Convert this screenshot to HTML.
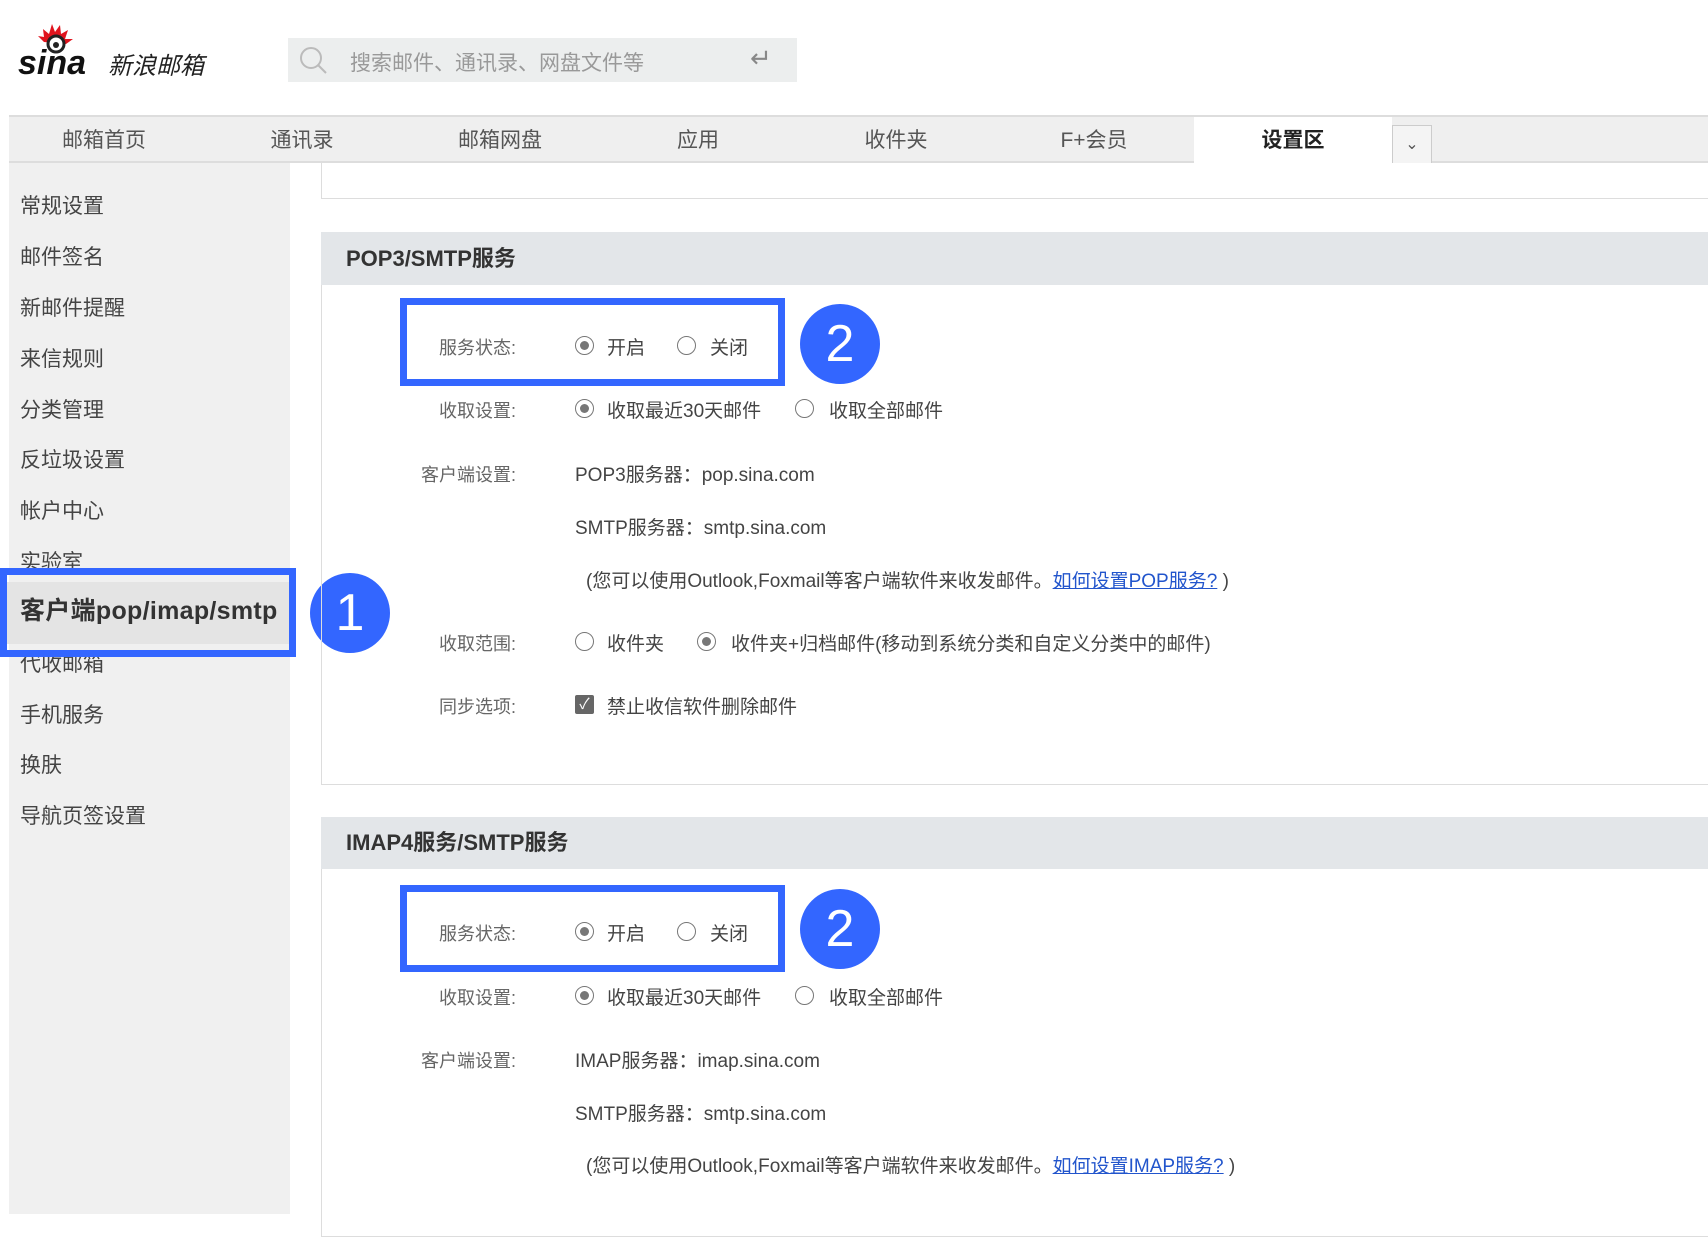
<!DOCTYPE html>
<html><head><meta charset="utf-8"><style>
*{margin:0;padding:0;box-sizing:border-box}
body{width:1708px;height:1214px;background:#fff;position:relative;overflow:hidden;font-family:"Liberation Sans","Noto Sans CJK SC",sans-serif;color:#333}
.a{position:absolute;white-space:nowrap}
.nav{position:absolute;top:115px;left:9px;width:1699px;height:48px;background:#efefef;border-top:2px solid #ddd;border-bottom:2px solid #ddd}
.tab{position:absolute;top:2px;height:44px;line-height:44px;font-size:21px;color:#555;text-align:center;width:198px}
.side{position:absolute;left:9px;top:163px;width:281px;height:1051px;background:#f0f0f0}
.si{position:absolute;left:20px;font-size:21px;color:#444;line-height:26px}
.hdr{position:absolute;left:321px;width:1387px;background:#e3e6e9;font-size:22px;font-weight:bold;color:#333;padding-left:25px}
.lbl{position:absolute;font-size:18px;color:#666;text-align:right;width:200px;left:316px}
.t{position:absolute;font-size:19px;color:#444;white-space:nowrap}
.r{position:absolute;width:19px;height:19px;border:1.5px solid #777;border-radius:50%;background:#fff}
.r.on::after{content:"";position:absolute;left:3.5px;top:3.5px;width:9px;height:9px;border-radius:50%;background:#777}
.box{position:absolute;border:7px solid #3366ff}
.c{position:absolute;width:80px;height:80px;border-radius:50%;background:#3366ff;color:#fff;font-size:52px;text-align:center;line-height:80px;font-family:"Liberation Sans",sans-serif}
a{color:#2255cc;text-decoration:underline}
</style></head><body>
<svg class="a" style="left:18px;top:22px" width="90" height="64" viewBox="0 0 90 64">
<path d="M34 2 l3 8 l5 -7 l1 9 l7 -4 l-3 9 l8 0 l-7 5 l-22 -2 l-6 -6 l6 1 l-1 -8 l6 5 z" fill="#e0141e"/>
<circle cx="38" cy="22" r="8" fill="#fff" stroke="#222" stroke-width="3"/><circle cx="38" cy="23" r="3" fill="#222"/>
<text x="0" y="52" font-family="Liberation Sans" font-weight="bold" font-style="italic" font-size="34" fill="#111">sina</text>
</svg>
<div class="a" style="left:108px;top:46px;font-size:24px;font-style:italic;color:#222">新浪邮箱</div>
<div class="a" style="left:288px;top:38px;width:509px;height:44px;background:#eceeee"></div>
<svg class="a" style="left:298px;top:45px" width="32" height="32"><circle cx="13" cy="13" r="10" fill="none" stroke="#bbb" stroke-width="2"/><line x1="20" y1="20" x2="28" y2="28" stroke="#bbb" stroke-width="2"/></svg>
<div class="a" style="left:350px;top:47px;font-size:21px;color:#999">搜索邮件、通讯录、网盘文件等</div>
<div class="a" style="left:750px;top:43px;font-size:26px;color:#888">↵</div>
<div class="nav">
<div class="tab" style="left:-4px">邮箱首页</div>
<div class="tab" style="left:194px">通讯录</div>
<div class="tab" style="left:392px">邮箱网盘</div>
<div class="tab" style="left:590px">应用</div>
<div class="tab" style="left:788px">收件夹</div>
<div class="tab" style="left:986px">F+会员</div>
<div class="tab" style="left:1185px;top:0;line-height:48px;background:#fff;color:#222;font-weight:bold;height:46px">设置区</div>
<div style="position:absolute;left:1383px;top:8px;width:40px;height:38px;border:1px solid #ccc;border-bottom:none;background:#f4f4f4;text-align:center;line-height:38px;color:#555;font-size:16px">⌄</div>
</div>
<div class="side"></div>
<div class="si" style="top:194px">常规设置</div>
<div class="si" style="top:245px">邮件签名</div>
<div class="si" style="top:296px">新邮件提醒</div>
<div class="si" style="top:347px">来信规则</div>
<div class="si" style="top:398px">分类管理</div>
<div class="si" style="top:448px">反垃圾设置</div>
<div class="si" style="top:499px">帐户中心</div>
<div class="si" style="top:550px">实验室</div>
<div class="a" style="left:7px;top:582px;width:282px;height:62px;background:#e4e4e4"></div>
<div class="si" style="top:598px;font-weight:bold;color:#333;font-size:25px;letter-spacing:0.3px">客户端pop/imap/smtp</div>
<div class="si" style="top:652px">代收邮箱</div>
<div class="si" style="top:703px">手机服务</div>
<div class="si" style="top:753px">换肤</div>
<div class="si" style="top:804px">导航页签设置</div>
<div class="box" style="left:0;top:568px;width:296px;height:89px"></div>
<div class="c" style="left:310px;top:573px">1</div>
<div class="a" style="left:321px;top:163px;width:1400px;height:36px;border:1px solid #ddd;border-top:none"></div>
<div class="a" style="left:321px;top:232px;width:1400px;height:553px;border:1px solid #ddd"></div>
<div class="hdr" style="top:232px;height:53px;line-height:53px">POP3/SMTP服务</div>
<div class="a" style="left:321px;top:817px;width:1400px;height:420px;border:1px solid #ddd"></div>
<div class="hdr" style="top:817px;height:52px;line-height:52px">IMAP4服务/SMTP服务</div>

<div class="lbl" style="top:334px">服务状态:</div>
<div class="r on" style="left:575px;top:336px"></div><div class="t" style="left:607px;top:333px">开启</div>
<div class="r" style="left:677px;top:336px"></div><div class="t" style="left:710px;top:333px">关闭</div>
<div class="lbl" style="top:397px">收取设置:</div>
<div class="r on" style="left:575px;top:399px"></div><div class="t" style="left:607px;top:396px">收取最近30天邮件</div>
<div class="r" style="left:795px;top:399px"></div><div class="t" style="left:829px;top:396px">收取全部邮件</div>
<div class="lbl" style="top:461px">客户端设置:</div>
<div class="t" style="left:575px;top:460px">POP3服务器：pop.sina.com</div>
<div class="t" style="left:575px;top:513px">SMTP服务器：smtp.sina.com</div>
<div class="t" style="left:586px;top:566px">(您可以使用Outlook,Foxmail等客户端软件来收发邮件。<a>如何设置POP服务?</a> )</div>
<div class="lbl" style="top:630px">收取范围:</div>
<div class="r" style="left:575px;top:632px"></div><div class="t" style="left:607px;top:629px">收件夹</div>
<div class="r on" style="left:697px;top:632px"></div><div class="t" style="left:731px;top:629px">收件夹+归档邮件(移动到系统分类和自定义分类中的邮件)</div>
<div class="lbl" style="top:693px">同步选项:</div>
<div class="a" style="left:575px;top:695px;width:19px;height:19px;background:#666;border-radius:2px;color:#fff;font-size:15px;line-height:19px;text-align:center">✓</div>
<div class="t" style="left:607px;top:692px">禁止收信软件删除邮件</div>
<div class="box" style="left:400px;top:298px;width:385px;height:88px"></div>
<div class="c" style="left:800px;top:304px">2</div>

<div class="lbl" style="top:920px">服务状态:</div>
<div class="r on" style="left:575px;top:922px"></div><div class="t" style="left:607px;top:919px">开启</div>
<div class="r" style="left:677px;top:922px"></div><div class="t" style="left:710px;top:919px">关闭</div>
<div class="lbl" style="top:984px">收取设置:</div>
<div class="r on" style="left:575px;top:986px"></div><div class="t" style="left:607px;top:983px">收取最近30天邮件</div>
<div class="r" style="left:795px;top:986px"></div><div class="t" style="left:829px;top:983px">收取全部邮件</div>
<div class="lbl" style="top:1047px">客户端设置:</div>
<div class="t" style="left:575px;top:1046px">IMAP服务器：imap.sina.com</div>
<div class="t" style="left:575px;top:1099px">SMTP服务器：smtp.sina.com</div>
<div class="t" style="left:586px;top:1151px">(您可以使用Outlook,Foxmail等客户端软件来收发邮件。<a>如何设置IMAP服务?</a> )</div>
<div class="box" style="left:400px;top:885px;width:385px;height:87px"></div>
<div class="c" style="left:800px;top:889px">2</div>
</body></html>
